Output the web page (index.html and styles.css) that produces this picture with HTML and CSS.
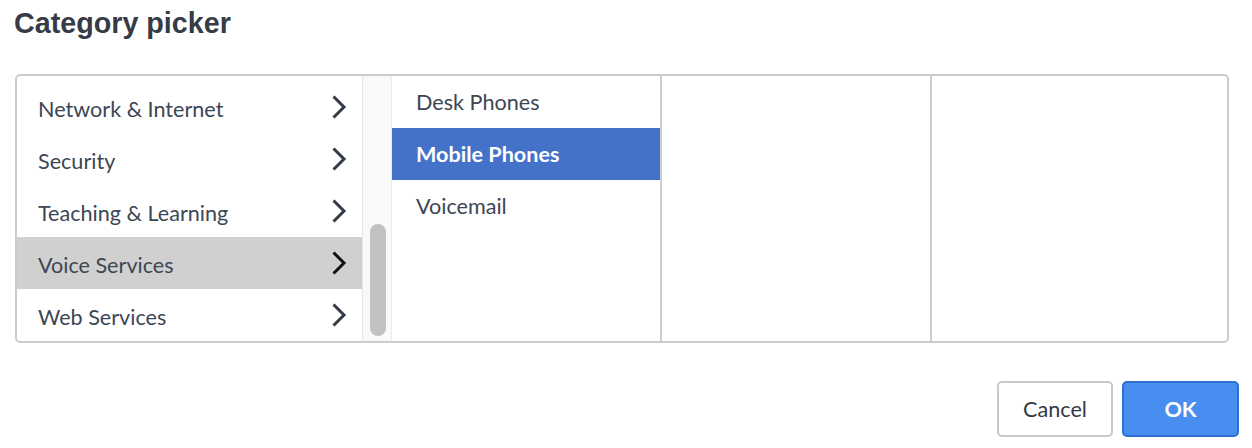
FILE: index.html
```html
<!DOCTYPE html>
<html>
<head>
<meta charset="utf-8">
<link rel="stylesheet" href="styles.css">
</head>
<body>
<div class="page">
  <h1 class="title">Category picker</h1>
  <div class="picker">
    <div class="col col-first">
      <div class="list">
        <div class="row"><span class="label">Network &amp; Internet</span><svg class="chev" viewBox="0 0 16 26"><polyline points="2.5,2.5 13,13 2.5,23.5"/></svg></div>
        <div class="row"><span class="label">Security</span><svg class="chev" viewBox="0 0 16 26"><polyline points="2.5,2.5 13,13 2.5,23.5"/></svg></div>
        <div class="row"><span class="label">Teaching &amp; Learning</span><svg class="chev" viewBox="0 0 16 26"><polyline points="2.5,2.5 13,13 2.5,23.5"/></svg></div>
        <div class="row row-active"><span class="label">Voice Services</span><svg class="chev" viewBox="0 0 16 26"><polyline points="2.5,2.5 13,13 2.5,23.5"/></svg></div>
        <div class="row"><span class="label">Web Services</span><svg class="chev" viewBox="0 0 16 26"><polyline points="2.5,2.5 13,13 2.5,23.5"/></svg></div>
      </div>
      <div class="scrollbar"><div class="thumb"></div></div>
    </div>
    <div class="col col-mid">
      <div class="item">Desk Phones</div>
      <div class="item item-selected">Mobile Phones</div>
      <div class="item">Voicemail</div>
    </div>
    <div class="col col-mid"></div>
    <div class="col col-last"></div>
  </div>
  <div class="actions">
    <button class="btn btn-cancel">Cancel</button>
    <button class="btn btn-ok">OK</button>
  </div>
</div>
</body>
</html>
```

FILE: styles.css
```css
html, body {
  margin: 0;
  padding: 0;
  background: #ffffff;
}

.page {
  width: 1252px;
  height: 448px;
  box-sizing: border-box;
  padding: 0 13px 0 15px;
  font-family: Lato, "Open Sans", sans-serif;
  color: #3d4654;
}

.title {
  margin: 0 0 0 -1px;
  padding-top: 6px;
  height: 74px;
  box-sizing: border-box;
  font-family: "Liberation Sans", Arial, sans-serif;
  font-weight: bold;
  font-size: 28.7px;
  line-height: 34px;
  color: #363b45;
}

.picker {
  width: 1214px;
  height: 269px;
  box-sizing: border-box;
  border: 2px solid #cccccc;
  border-radius: 5px;
  display: flex;
  overflow: hidden;
}

.col {
  height: 100%;
}

.col-first {
  width: 375px;
  display: flex;
}

.list {
  width: 345px;
  height: 100%;
  display: flex;
  flex-direction: column;
  justify-content: flex-end;
}

.row {
  flex: 0 0 52px;
  height: 52px;
  display: flex;
  align-items: center;
  justify-content: space-between;
  padding: 0 15px 0 21px;
  font-size: 21.6px;
}

.label {
  padding-top: 4px;
}

.row-active {
  background: #d0d0d0;
}

.chev {
  width: 16px;
  height: 26px;
  fill: none;
  stroke: #333b46;
  stroke-width: 3;
  stroke-linecap: butt;
  stroke-linejoin: miter;
}

.row-active .chev {
  stroke: #111111;
}

.scrollbar {
  width: 30px;
  height: 100%;
  box-sizing: border-box;
  background: #f9f9f9;
  border-left: 1px solid #e6e6e6;
  border-right: 1px solid #ececec;
  display: flex;
  flex-direction: column;
  justify-content: flex-end;
  align-items: center;
  padding: 0 0 5px 1px;
}

.thumb {
  width: 16px;
  height: 112px;
  border-radius: 8px;
  background: #c1c1c1;
}

.col-mid {
  width: 270px;
  box-sizing: border-box;
  border-right: 2px solid #cccccc;
}

.col-last {
  flex: 1;
}

.item {
  height: 52px;
  display: flex;
  align-items: center;
  padding-left: 24px;
  font-size: 21.6px;
}

.item-selected {
  background: #4472c9;
  color: #ffffff;
  font-weight: bold;
}

.actions {
  display: flex;
  justify-content: flex-end;
  gap: 9px;
  padding-top: 38px;
}

.btn {
  height: 56px;
  border-radius: 5px;
  font-family: Lato, "Open Sans", sans-serif;
  font-size: 21.6px;
  cursor: pointer;
}

.btn-cancel {
  width: 116px;
  background: #ffffff;
  border: 2px solid #c8c8ca;
  color: #333b46;
}

.btn-ok {
  width: 117px;
  background: #478ef0;
  border: 2px solid #2e6fd4;
  color: #ffffff;
  font-weight: bold;
}
```
